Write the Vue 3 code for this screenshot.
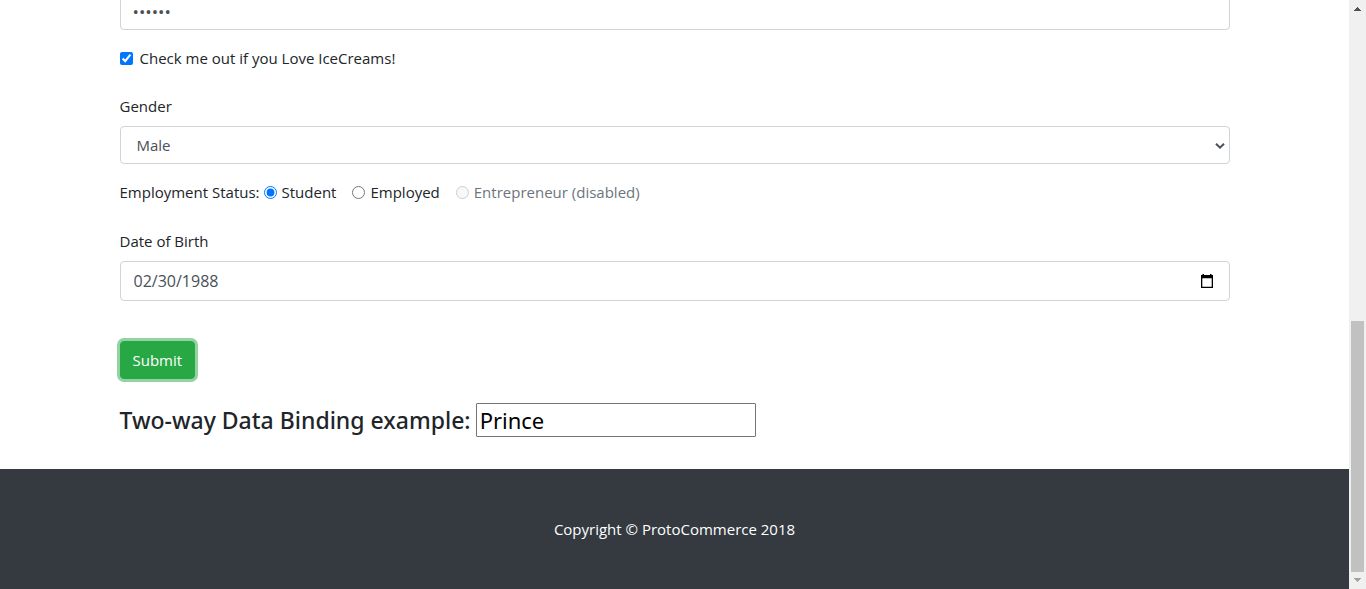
<script setup>
import { ref } from 'vue'

const password = ref('secret')
const likesIceCream = ref(true)
const gender = ref('Male')
const status = ref('student')
const birthDate = ref('02/30/1988')
const name = ref('Prince')
</script>

<template>
  <div class="page">
    <div class="content">
      <main class="container">
        <form class="form" @submit.prevent>
          <input v-model="password" class="control password" type="password" aria-label="Password" />

          <div class="check">
            <input id="ice" v-model="likesIceCream" type="checkbox" />
            <label for="ice">Check me out if you Love IceCreams!</label>
          </div>

          <div class="group">
            <label for="gender">Gender</label>
            <div class="field">
              <select id="gender" v-model="gender" class="control select">
                <option>Male</option>
                <option>Female</option>
              </select>
              <svg class="chevron" viewBox="0 0 10 8" aria-hidden="true">
                <path d="M1 1.8 5 5.6 9 1.8" fill="none" stroke="#495057" stroke-width="2" />
              </svg>
            </div>
          </div>

          <div class="status" role="radiogroup" aria-labelledby="status-label">
            <span id="status-label" class="status-label">Employment Status:</span>
            <div class="option">
              <input id="student" v-model="status" type="radio" name="status" value="student" />
              <label for="student">Student</label>
            </div>
            <div class="option">
              <input id="employed" v-model="status" type="radio" name="status" value="employed" />
              <label for="employed">Employed</label>
            </div>
            <div class="option disabled">
              <input id="entrepreneur" v-model="status" type="radio" name="status" value="entrepreneur" disabled />
              <label for="entrepreneur">Entrepreneur (disabled)</label>
            </div>
          </div>

          <div class="group">
            <label for="dob">Date of Birth</label>
            <div class="field">
              <input id="dob" v-model="birthDate" class="control date" type="text" />
              <button class="picker" type="button" aria-label="Show date picker">
                <svg viewBox="0 0 14 14" aria-hidden="true">
                  <path d="M1 1h12v13H1zM2.3 4.3v8.4h9.4V4.3z" fill="#000" fill-rule="evenodd" />
                  <path d="M2.5 0H4v2H2.5zM10 0h1.5v2H10z" fill="#000" />
                </svg>
              </button>
            </div>
          </div>

          <button class="submit" type="submit">Submit</button>
        </form>

        <h4 class="binding">
          <label for="name">Two-way Data Binding example:</label>
          <input id="name" v-model="name" type="text" />
        </h4>
      </main>

      <footer class="footer">
        <p>Copyright © ProtoCommerce 2018</p>
      </footer>
    </div>

    <div class="scrollbar" aria-hidden="true">
      <svg class="arrow" viewBox="0 0 7 4" shape-rendering="crispEdges">
        <path d="M3 0h1v1h1v1h1v1h1v1H0V3h1V2h1V1h1z" fill="#505050" />
      </svg>
      <div class="thumb"></div>
      <svg class="arrow" viewBox="0 0 7 4" shape-rendering="crispEdges">
        <path d="M0 0h7v1H6v1H5v1H4v1H3V3H2V2H1V1H0z" fill="#a3a3a3" />
      </svg>
    </div>
  </div>
</template>

<style>
body {
  margin: 0;
  background: #fff;
}
</style>

<style scoped>
* {
  box-sizing: border-box;
}

.page {
  display: flex;
  height: 100vh;
  overflow: hidden;
  color: #212529;
  font: 400 15px/24px "Segoe UI", "Open Sans", "Noto Sans", sans-serif;
}

.content {
  flex: 1;
  display: flex;
  flex-direction: column;
}

.container {
  width: 100%;
  max-width: 1140px;
  margin: -8px auto 0;
  padding: 0 15px;
}

.form {
  display: flex;
  flex-direction: column;
}

input,
select,
button {
  margin: 0;
  font: inherit;
}

.control {
  display: block;
  width: 100%;
  height: 38px;
  padding: 6px 12px;
  border: 1px solid #ced4da;
  border-radius: 4px;
  background: #fff;
  color: #495057;
}

.password {
  font-size: 17px;
}

input[type="checkbox"],
input[type="radio"] {
  width: 13px;
  height: 13px;
  accent-color: #0075ff;
}

.check {
  display: flex;
  align-items: center;
  gap: 7px;
  margin: 16px 0 24px;
}

.group {
  display: flex;
  flex-direction: column;
  gap: 8px;
}

.field {
  position: relative;
}

.select {
  padding: 6px 16px;
  appearance: none;
}

.chevron {
  position: absolute;
  top: 16px;
  right: 5px;
  width: 10px;
  height: 8px;
}

.status {
  display: flex;
  align-items: center;
  gap: 16px;
  margin: 16px 0 25px;
}

.status-label {
  margin-right: -12px;
}

.option {
  display: flex;
  align-items: center;
  gap: 5px;
}

.disabled {
  color: #6c757d;
}

.date {
  height: 40px;
  padding: 6px 13px;
  font-size: 16px;
}

.picker {
  position: absolute;
  top: 13px;
  right: 16px;
  display: flex;
  padding: 0;
  border: 0;
  background: none;
}

.picker svg {
  width: 14px;
  height: 14px;
}

.submit {
  align-self: flex-start;
  height: 38px;
  margin-top: 40px;
  padding: 6px 12px;
  border: 1px solid #28a745;
  border-radius: 4px;
  background: #28a745;
  box-shadow: 0 0 0 3px rgba(40, 167, 69, 0.5);
  color: #fff;
}

.binding {
  display: flex;
  align-items: center;
  gap: 5px;
  margin: 24px 0 32px;
  font-family: "Segoe UI", "Noto Sans", "Open Sans", sans-serif;
  font-size: 23px;
  font-weight: 500;
  line-height: 34px;
}

.binding input {
  width: 280px;
  height: 34px;
  padding: 1px 3px;
  border: 1px solid #767676;
  border-radius: 1px;
  background: #fff;
  color: #000;
  font-size: 22px;
  font-weight: 400;
}

.footer {
  flex: 1;
  padding: 48px 15px;
  background: #343a40;
  color: #fff;
  text-align: center;
}

.footer p {
  margin: 0;
}

.scrollbar {
  display: flex;
  flex-direction: column;
  align-items: center;
  width: 17px;
  padding: 7px 2px;
  background: #f0f0f0;
}

.arrow {
  width: 7px;
  height: 4px;
}

.thumb {
  width: 13px;
  height: 251px;
  margin: auto 0 6px;
  background: #c1c1c1;
}
</style>
